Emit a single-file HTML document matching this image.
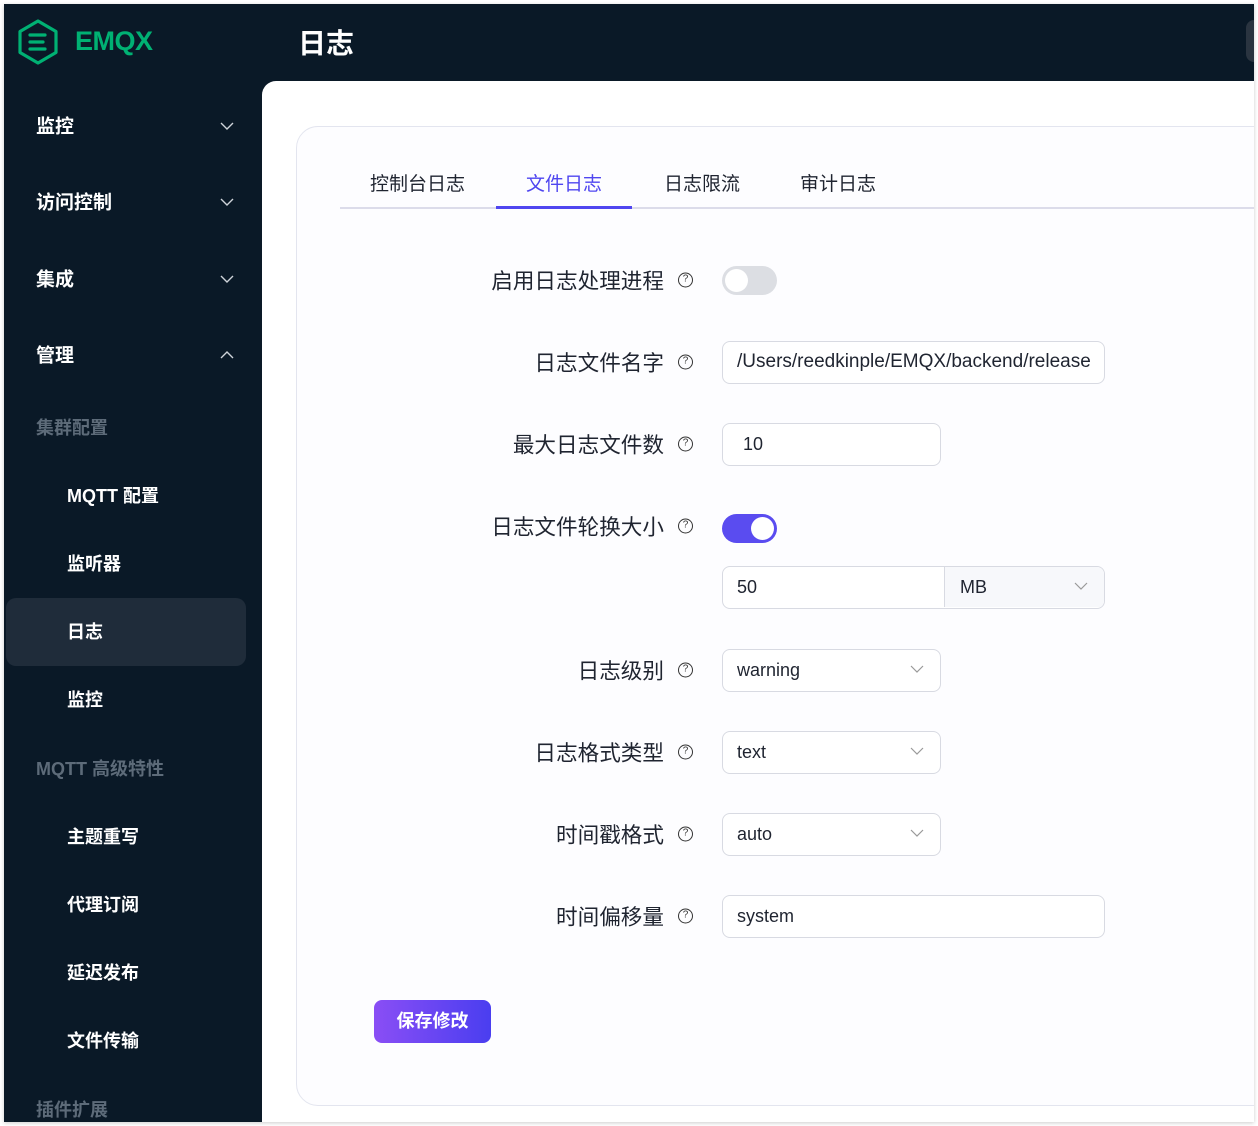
<!DOCTYPE html>
<html><head><meta charset="utf-8"><style>
*{margin:0;padding:0;box-sizing:border-box}
body{width:1258px;height:1126px;background:#fff;position:relative;overflow:hidden;font-family:"Liberation Sans","Noto Sans CJK SC",sans-serif}
.a{position:absolute}
#clip{position:absolute;left:4px;top:4px;width:1250px;height:1118px;overflow:hidden;background:#0a1927;box-shadow:0 1px 4px rgba(0,0,0,.2)}
#in{position:absolute;left:-4px;top:-4px;width:1258px;height:1126px}
.nav{position:absolute;left:36px;color:#fff;font-size:19px;font-weight:bold;transform:translateY(-50%)}
.sub{position:absolute;left:67px;color:#fff;font-size:18px;font-weight:bold;transform:translateY(-50%)}
.grp{position:absolute;left:36px;color:#5d6b79;font-size:18px;font-weight:bold;transform:translateY(-50%)}
.chev{position:absolute;left:220px;width:14px;height:8px}
.lbl{position:absolute;right:594px;font-size:21.6px;color:#1f2430;transform:translateY(-50%);white-space:nowrap}
.q{position:absolute;left:678px;width:15px;height:15px;border:1.3px solid #333;border-radius:50%;font-size:10px;line-height:12px;text-align:center;color:#333;transform:translateY(-50%)}
.inp{position:absolute;left:722px;height:43px;border:1.5px solid #d8dae2;border-radius:8px;background:#fff;font-size:18px;color:#1f2430;padding-left:14px;line-height:40px;overflow:hidden;white-space:nowrap}
.sel svg{position:absolute;right:16px;top:15px}
.tab{position:absolute;top:169px;font-size:19px;color:#1f2430}
</style></head><body>
<div id="clip"><div id="in">
<svg class="a" style="left:16px;top:18px" width="44" height="48" viewBox="0 0 44 48"><path d="M22 3 L40 13.5 L40 34.5 L22 45 L4 34.5 L4 13.5 Z" fill="none" stroke="#00b173" stroke-width="3.2" stroke-linejoin="round"/><path d="M14 17h15M14 24h13M14 31h15" stroke="#00b173" stroke-width="3.2" stroke-linecap="round"/></svg>
<div class="a" style="left:75px;top:26px;font-size:27px;color:#00b173;font-weight:bold;letter-spacing:-0.5px">EMQX</div>
<div class="a" style="left:298px;top:22px;font-size:28px;font-weight:bold;color:#fff">日志</div>
<div class="a" style="left:1246px;top:20px;width:20px;height:42px;background:#2a3440;border-radius:8px"></div>
<div class="nav" style="top:125px">监控</div>
<div class="nav" style="top:201px">访问控制</div>
<div class="nav" style="top:278px">集成</div>
<div class="nav" style="top:354px">管理</div>
<svg class="chev" style="top:122px" viewBox="0 0 14 8"><path d="M1 1l6 6 6-6" fill="none" stroke="#cfd4da" stroke-width="1.4"/></svg>
<svg class="chev" style="top:198px" viewBox="0 0 14 8"><path d="M1 1l6 6 6-6" fill="none" stroke="#cfd4da" stroke-width="1.4"/></svg>
<svg class="chev" style="top:275px" viewBox="0 0 14 8"><path d="M1 1l6 6 6-6" fill="none" stroke="#cfd4da" stroke-width="1.4"/></svg>
<svg class="chev" style="top:351px" viewBox="0 0 14 8"><path d="M1 7l6-6 6 6" fill="none" stroke="#cfd4da" stroke-width="1.4"/></svg>
<div class="grp" style="top:427px">集群配置</div>
<div class="sub" style="top:495px">MQTT 配置</div>
<div class="sub" style="top:563px">监听器</div>
<div class="a" style="left:6px;top:598px;width:240px;height:68px;background:#1f2c3a;border-radius:10px"></div>
<div class="sub" style="top:631px">日志</div>
<div class="sub" style="top:699px">监控</div>
<div class="grp" style="top:768px">MQTT 高级特性</div>
<div class="sub" style="top:836px">主题重写</div>
<div class="sub" style="top:904px">代理订阅</div>
<div class="sub" style="top:972px">延迟发布</div>
<div class="sub" style="top:1040px">文件传输</div>
<div class="grp" style="top:1109px">插件扩展</div>
<div class="a" style="left:262px;top:81px;width:1000px;height:1050px;background:#fff;border-radius:14px 0 0 0"></div>
<div class="a" style="left:296px;top:126px;width:980px;height:980px;background:#fdfdff;border:1.5px solid #e3e5ef;border-radius:22px"></div>
<div class="tab" style="left:370px">控制台日志</div>
<div class="tab" style="left:526px;color:#4f46f0">文件日志</div>
<div class="tab" style="left:664px">日志限流</div>
<div class="tab" style="left:800px">审计日志</div>
<div class="a" style="left:340px;top:207px;width:930px;height:1.5px;background:#dcdcea"></div>
<div class="a" style="left:496px;top:206px;width:136px;height:3px;background:#5046f0"></div>
<div class="lbl" style="top:280px">启用日志处理进程</div><div class="q" style="top:280px">?</div>
<div class="a" style="left:722px;top:266px;width:55px;height:29px;border-radius:15px;background:#dcdee3"><div class="a" style="left:3px;top:3px;width:23px;height:23px;border-radius:50%;background:#fff"></div></div>
<div class="lbl" style="top:362px">日志文件名字</div><div class="q" style="top:362px">?</div>
<div class="inp" style="top:341px;width:383px;padding-right:14px;font-size:19px">/Users/reedkinple/EMQX/backend/release</div>
<div class="lbl" style="top:444px">最大日志文件数</div><div class="q" style="top:444px">?</div>
<div class="inp" style="top:423px;width:219px;padding-left:20px">10</div>
<div class="lbl" style="top:526px">日志文件轮换大小</div><div class="q" style="top:526px">?</div>
<div class="a" style="left:722px;top:514px;width:55px;height:29px;border-radius:15px;background:#5a4cf0"><div class="a" style="left:29px;top:3px;width:23px;height:23px;border-radius:50%;background:#fff"></div></div>
<div class="inp sel" style="top:566px;width:383px;padding-left:0">
<span style="padding-left:14px">50</span>
<div class="a" style="left:221px;top:0;width:160px;height:40px;background:#f7f8fb;border-left:1.5px solid #d8dae2;padding-left:15px">MB</div>
<svg width="14" height="8" viewBox="0 0 14 8"><path d="M1 1l6 6 6-6" fill="none" stroke="#999" stroke-width="1.2"/></svg></div>
<div class="lbl" style="top:670px">日志级别</div><div class="q" style="top:670px">?</div>
<div class="inp sel" style="top:649px;width:219px">warning<svg width="14" height="8" viewBox="0 0 14 8"><path d="M1 1l6 6 6-6" fill="none" stroke="#999" stroke-width="1.2"/></svg></div>
<div class="lbl" style="top:752px">日志格式类型</div><div class="q" style="top:752px">?</div>
<div class="inp sel" style="top:731px;width:219px">text<svg width="14" height="8" viewBox="0 0 14 8"><path d="M1 1l6 6 6-6" fill="none" stroke="#999" stroke-width="1.2"/></svg></div>
<div class="lbl" style="top:834px">时间戳格式</div><div class="q" style="top:834px">?</div>
<div class="inp sel" style="top:813px;width:219px">auto<svg width="14" height="8" viewBox="0 0 14 8"><path d="M1 1l6 6 6-6" fill="none" stroke="#999" stroke-width="1.2"/></svg></div>
<div class="lbl" style="top:916px">时间偏移量</div><div class="q" style="top:916px">?</div>
<div class="inp" style="top:895px;width:383px">system</div>
<div class="a" style="left:374px;top:1000px;width:117px;height:43px;border-radius:8px;background:linear-gradient(90deg,#8a4ef5,#4a3ef0);color:#fff;font-size:18px;font-weight:bold;text-align:center;line-height:43px">保存修改</div>
</div></div>
</body></html>
